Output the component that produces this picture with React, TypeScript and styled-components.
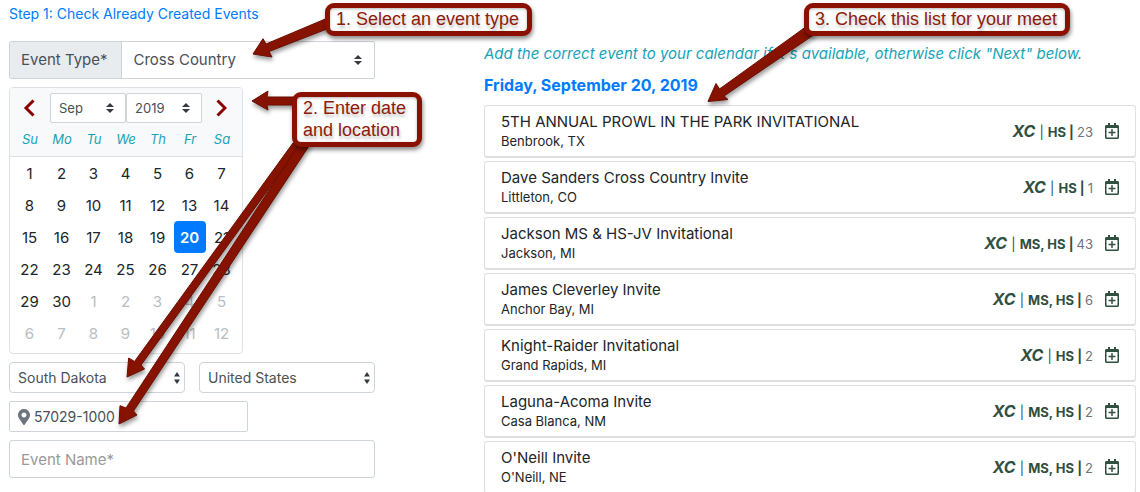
import React, { useState } from 'react';
import styled, { createGlobalStyle, css } from 'styled-components';
import { FaMapMarkerAlt, FaRegCalendarPlus } from 'react-icons/fa';

const GlobalStyle = createGlobalStyle`
  *, *::before, *::after { box-sizing: border-box; }
  html { scrollbar-width: none; }
  body {
    margin: 0;
    background: #fff;
    color: #212529;
    font-family: Inter, "Liberation Sans", sans-serif;
    font-size: 15px;
    line-height: 24px;
  }
  button, input, select { font: inherit; color: inherit; }
`;

const Page = styled.main`
  position: relative;
  display: grid;
  grid-template-columns: 5fr 7fr;
`;

const FormColumn = styled.form`
  display: flex;
  flex-direction: column;
  align-items: stretch;
  gap: 8px;
  padding: 2px 100px 14px 9px;
`;

const StepTitle = styled.h1`
  margin: 0 0 7px;
  font-size: 14px;
  font-weight: 400;
  line-height: 24px;
  color: #007bff;
`;

const InputGroup = styled.div`
  display: flex;
  height: 38px;
  border: 1px solid #ced4da;
  border-radius: 2px;
`;

const GroupLabel = styled.label`
  display: flex;
  align-items: center;
  padding: 0 13px 0 11px;
  border-right: 1px solid #ced4da;
  background: #e9ecef;
  color: #495057;
`;

const SelectShell = styled.div<{ $width?: string }>`
  display: grid;
  align-items: center;
  width: ${p => p.$width ?? 'auto'};
  flex: ${p => (p.$width ? 'none' : '1 1 0')};
  & > * { grid-area: 1 / 1; }
`;

type SelectKind = 'plain' | 'small' | 'round';

const NativeSelect = styled.select<{ $kind: SelectKind }>`
  appearance: none;
  width: 100%;
  height: 100%;
  margin: 0;
  padding: 0 12px;
  border: 0;
  background: transparent;
  color: #495057;
  ${p => p.$kind !== 'plain' && css`
    height: ${p.$kind === 'small' ? 30 : 31}px;
    padding: 0 8px;
    border: 1px solid #ced4da;
    border-radius: ${p.$kind === 'small' ? 2 : 4}px;
    background: #fff;
    font-size: ${p.$kind === 'small' ? 13 : 14}px;
  `}
`;

const Caret = styled.svg<{ $right: number }>`
  justify-self: end;
  margin-right: ${p => p.$right}px;
  pointer-events: none;
  fill: #343a40;
`;

const Calendar = styled.section`
  width: 234px;
  border: 1px solid #dee2e6;
  border-radius: 4px;
  overflow: hidden;
`;

const CalendarHeader = styled.div`
  display: flex;
  align-items: center;
  justify-content: space-between;
  padding: 5px 4px 0;
  background: #f8f9fa;
`;

const MonthFields = styled.div`
  display: flex;
`;

const NavButton = styled.button`
  display: flex;
  align-items: center;
  justify-content: center;
  width: 32px;
  height: 30px;
  padding: 0 2px 0 0;
  border: 0;
  background: none;
`;

const DayTable = styled.table`
  display: block;
  tr { display: grid; grid-template-columns: repeat(7, 1fr); }
  td, th { padding: 0; }
`;

const WeekHead = styled.thead`
  display: block;
  padding: 0 4px;
  background: #f8f9fa;
  border-bottom: 1px solid #dee2e6;
`;

const WeekDay = styled.th`
  font-size: 13px;
  font-style: italic;
  font-weight: 400;
  line-height: 33px;
  text-align: center;
  color: #17a2b8;
`;

const Days = styled.tbody`
  display: block;
  padding: 0 4px 4px;
`;

const DayButton = styled.button<{ $muted: boolean; $selected: boolean }>`
  display: block;
  width: 32px;
  height: 32px;
  padding: 1px 1px 0 0;
  border: 0;
  border-radius: 4px;
  background: ${p => (p.$selected ? '#007bff' : 'transparent')};
  color: ${p => (p.$selected ? '#fff' : p.$muted ? '#b9bdc2' : '#212529')};
  font-weight: ${p => (p.$selected ? 600 : 400)};
`;

const Split = styled.div`
  display: grid;
  grid-template-columns: 1fr 1fr;
  gap: 14px;
`;

const ZipBox = styled.label`
  display: flex;
  align-items: center;
  gap: 4px;
  width: 239px;
  height: 31px;
  padding: 0 8px;
  border: 1px solid #ced4da;
  border-radius: 2px;
  color: #6c757d;
`;

const Pin = styled(FaMapMarkerAlt)`
  width: 12px;
  height: 16px;
`;

const ZipInput = styled.input`
  flex: 1;
  min-width: 0;
  padding: 0;
  border: 0;
  outline: 0;
  font-size: 14px;
  color: #495057;
`;

const NameInput = styled.input`
  height: 38px;
  padding: 0 11px;
  border: 1px solid #ced4da;
  border-radius: 3px;
  &::placeholder { color: #999; opacity: 1; }
`;

const ListColumn = styled.section`
  position: relative;
  padding: 42px 4px 0 9px;
`;

const Hint = styled.p`
  margin: 0 0 7px;
  font-style: italic;
  color: #17a2b8;
`;

const DateTitle = styled.h2`
  margin: 0 0 8px;
  font-size: 16px;
  font-weight: 700;
  line-height: 24px;
  color: #007bff;
`;

const EventList = styled.ul`
  display: flex;
  flex-direction: column;
  gap: 3px;
  margin: 0;
  padding: 0;
  list-style: none;
`;

const EventCard = styled.li`
  display: flex;
  align-items: center;
  justify-content: space-between;
  height: 53px;
  padding: 0 15px 0 16px;
  border: 1px solid #dedfe0;
  border-bottom-width: 2px;
  border-radius: 3px;
`;

const EventName = styled.div`
  line-height: 20px;
`;

const EventPlace = styled.div`
  font-size: 13px;
  line-height: 18px;
`;

const EventMeta = styled.div`
  display: flex;
  align-items: center;
  gap: 11px;
  color: #2f4f3f;
`;

const MetaText = styled.span`
  font-size: 13px;
  font-weight: 700;
`;

const Sport = styled.i`
  margin-right: 1px;
  font-size: 16px;
`;

const Bar = styled.span`
  margin-right: 1px;
  font-weight: 400;
`;

const Count = styled.span`
  font-weight: 400;
  color: #6c757d;
`;

const AddButton = styled.button`
  display: flex;
  padding: 0;
  border: 0;
  background: none;
  color: inherit;
`;

const Callout = styled.div<{ $left: number; $top: number; $width: number }>`
  position: absolute;
  left: ${p => p.$left}px;
  top: ${p => p.$top}px;
  width: ${p => p.$width}px;
  padding: 0 6px 1px;
  border: 5px solid #8a1000;
  border-radius: 9px;
  background: #fff;
  box-shadow: 1px 3px 4px rgba(0, 0, 0, 0.45), inset 0 1px 3px rgba(0, 0, 0, 0.3);
  color: #8f1a0a;
  font-family: "Liberation Sans", Arial, sans-serif;
  font-size: 18px;
  line-height: 22px;
  white-space: pre-line;
  text-shadow: 1px 3px 3px rgba(0, 0, 0, 0.25);
`;

const Arrows = styled.svg`
  position: absolute;
  left: 0;
  top: 0;
  overflow: visible;
  pointer-events: none;
  fill: #861300;
  stroke: #6d0d00;
  stroke-width: 1;
  stroke-linejoin: round;
  filter: drop-shadow(1px 3px 2px rgba(0, 0, 0, 0.4));
`;

interface PickerProps {
  id?: string;
  label?: string;
  options: string[];
  kind: SelectKind;
  width?: string;
}

function Picker({ id, label, options, kind, width }: PickerProps) {
  return (
    <SelectShell $width={width}>
      <NativeSelect id={id} aria-label={label} $kind={kind}>
        {options.map(o => <option key={o}>{o}</option>)}
      </NativeSelect>
      {kind === 'round' ? (
        <Caret $right={4} width="8" height="14" viewBox="0 0 8 14" aria-hidden>
          <path d="M4 1L7 5.500H1zM4 13L1 8.500H7z" />
        </Caret>
      ) : (
        <Caret $right={12} width="8" height="10" viewBox="0 0 4 5" aria-hidden>
          <path d="M2 0L0 2h4zm0 5L0 3h4z" />
        </Caret>
      )}
    </SelectShell>
  );
}

const weekDays = ['Su', 'Mo', 'Tu', 'We', 'Th', 'Fr', 'Sa'];
const weeks = Array.from({ length: 6 }, (_, w) =>
  Array.from({ length: 7 }, (_, d) => w * 7 + d + 1),
);

const events = [
  { name: '5TH ANNUAL PROWL IN THE PARK INVITATIONAL', place: 'Benbrook, TX', levels: 'HS', count: 23 },
  { name: 'Dave Sanders Cross Country Invite', place: 'Littleton, CO', levels: 'HS', count: 1 },
  { name: 'Jackson MS & HS-JV Invitational', place: 'Jackson, MI', levels: 'MS, HS', count: 43 },
  { name: 'James Cleverley Invite', place: 'Anchor Bay, MI', levels: 'MS, HS', count: 6 },
  { name: 'Knight-Raider Invitational', place: 'Grand Rapids, MI', levels: 'HS', count: 2 },
  { name: 'Laguna-Acoma Invite', place: 'Casa Blanca, NM', levels: 'MS, HS', count: 2 },
  { name: "O'Neill Invite", place: "O'Neill, NE", levels: 'MS, HS', count: 2 },
];

export default function App() {
  const [selected, setSelected] = useState(20);

  return (
    <>
      <GlobalStyle />
      <Page>
        <FormColumn>
          <StepTitle>Step 1: Check Already Created Events</StepTitle>
          <InputGroup>
            <GroupLabel htmlFor="event-type">Event Type*</GroupLabel>
            <Picker id="event-type" kind="plain" options={['Cross Country', 'Track & Field']} />
          </InputGroup>
          <Calendar>
            <CalendarHeader>
              <NavButton type="button" aria-label="Previous month">
                <svg width="12" height="18" viewBox="0 0 12 18" fill="none" stroke="#8b0000" strokeWidth="3">
                  <path d="M10.500 1.500L3 9l7.500 7.500" />
                </svg>
              </NavButton>
              <MonthFields>
                <Picker label="Month" kind="small" width="76px" options={['Sep', 'Oct', 'Nov']} />
                <Picker label="Year" kind="small" width="76px" options={['2019', '2020']} />
              </MonthFields>
              <NavButton type="button" aria-label="Next month">
                <svg width="12" height="18" viewBox="0 0 12 18" fill="none" stroke="#8b0000" strokeWidth="3">
                  <path d="M2.500 1.500L10 9l-7.500 7.500" />
                </svg>
              </NavButton>
            </CalendarHeader>
            <DayTable>
              <WeekHead>
                <tr>{weekDays.map(d => <WeekDay key={d} scope="col">{d}</WeekDay>)}</tr>
              </WeekHead>
              <Days>
                {weeks.map(week => (
                  <tr key={week[0]}>
                    {week.map(n => (
                      <td key={n}>
                        <DayButton
                          type="button"
                          $muted={n > 30}
                          $selected={n === selected}
                          onClick={() => setSelected(n)}
                        >
                          {n > 30 ? n - 30 : n}
                        </DayButton>
                      </td>
                    ))}
                  </tr>
                ))}
              </Days>
            </DayTable>
          </Calendar>
          <Split>
            <Picker label="State" kind="round" options={['South Dakota', 'Texas']} />
            <Picker label="Country" kind="round" options={['United States', 'Canada']} />
          </Split>
          <ZipBox>
            <Pin aria-hidden />
            <ZipInput aria-label="Postal code" defaultValue="57029-1000" />
          </ZipBox>
          <NameInput aria-label="Event name" placeholder="Event Name*" />
        </FormColumn>

        <ListColumn>
          <Hint>
            Add the correct event to your calendar if it's available, otherwise click "Next" below.
          </Hint>
          <DateTitle>Friday, September 20, 2019</DateTitle>
          <EventList>
            {events.map(e => (
              <EventCard key={e.name}>
                <div>
                  <EventName>{e.name}</EventName>
                  <EventPlace>{e.place}</EventPlace>
                </div>
                <EventMeta>
                  <MetaText>
                    <Sport>XC</Sport> <Bar>|</Bar> {e.levels} | <Count>{e.count}</Count>
                  </MetaText>
                  <AddButton type="button" aria-label={`Add ${e.name}`}>
                    <FaRegCalendarPlus size={16} />
                  </AddButton>
                </EventMeta>
              </EventCard>
            ))}
          </EventList>
          <Arrows width="400" height="110" aria-hidden>
            <path d="M233 101.500L241 83.500L244.500 89L332 26L340 34L249 96L253 99.500Z" />
          </Arrows>
          <Callout $left={329} $top={3} $width={266}>3. Check this list for your meet</Callout>
        </ListColumn>

        <Arrows width="440" height="440" aria-hidden>
          <path d="M253 54L263 38.700L266 44L330 17L332 27L269 51.500L272 57Z" />
          <path d="M252 101L268 91L267 97H300V105H267L268 110Z" />
          <path d="M127 377L128.700 358L134.500 361.500L293 143H302L141 365L144.500 369Z" />
          <path d="M119 424L120 405.700L126 408L300 143L311 143L133.500 411L137 415Z" />
        </Arrows>
        <Callout $left={325} $top={3} $width={207}>1. Select an event type</Callout>
        <Callout $left={292} $top={92} $width={130}>{'2. Enter date\nand location'}</Callout>
      </Page>
    </>
  );
}
